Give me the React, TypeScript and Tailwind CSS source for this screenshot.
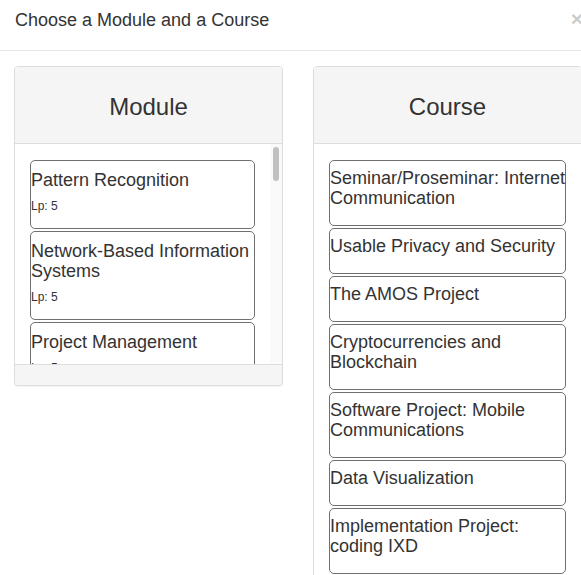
import React from "react";

const modules = [
  { name: "Pattern Recognition", lp: 5 },
  { name: "Network-Based Information Systems", lp: 5 },
  { name: "Project Management", lp: 5 },
  { name: "Software Engineering", lp: 5 },
];

const courses = [
  "Seminar/Proseminar: Internet Communication",
  "Usable Privacy and Security",
  "The AMOS Project",
  "Cryptocurrencies and Blockchain",
  "Software Project: Mobile Communications",
  "Data Visualization",
  "Implementation Project: coding IXD",
  "Machine Learning",
];

function PanelHeading({ title }: { title: string }) {
  return (
    <div className="bg-[#f5f5f5] border-b border-[#ddd] text-center text-[24px] leading-[26px] pt-[27px] pb-[23px] text-[#333]">
      {title}
    </div>
  );
}

export default function App() {
  return (
    <div className="relative w-[581px] h-[575px] overflow-hidden bg-white text-[#333] font-['Liberation_Sans',Arial,sans-serif]">
      <div className="relative border-b border-[#e5e5e5] pl-[15px] pt-[7px] pb-[17px]">
        <h4 className="text-[18px] leading-[26px] font-normal">Choose a Module and a Course</h4>
        <span className="absolute right-[-2px] top-[8px] text-[21px] font-bold leading-[21px] text-black opacity-20">
          ×
        </span>
      </div>
      <div className="flex pl-[14px] pt-[15px] gap-[30px]">
        {/* Module panel */}
        <div className="w-[269px] shrink-0 self-start border border-[#ddd] rounded-[4px] shadow-[0_1px_1px_rgba(0,0,0,0.05)] overflow-hidden bg-white">
          <PanelHeading title="Module" />
          <div className="flex h-[220px]">
            <div className="flex-1 overflow-hidden pl-[15px] pr-[15px] pt-[16px]">
              {modules.map((m) => (
                <div key={m.name} className="border border-[#707070] rounded-[5px] mb-[2px]">
                  <h4 className="text-[18px] leading-[20px] font-normal mt-[9px] mb-[8px]">{m.name}</h4>
                  <p className="text-[12px] leading-[17px] mb-[13px]">Lp: {m.lp}</p>
                </div>
              ))}
            </div>
            <div className="w-[12px] shrink-0 bg-[#fafafa] pt-[3px] flex justify-center">
              <div className="w-[6px] h-[34px] rounded-full bg-[#c1c1c1]" />
            </div>
          </div>
          <div className="h-[21px] border-t border-[#ddd] bg-[#f5f5f5]" />
        </div>
        {/* Course panel */}
        <div className="w-[269px] shrink-0 border border-[#ddd] rounded-[4px] shadow-[0_1px_1px_rgba(0,0,0,0.05)] bg-white">
          <PanelHeading title="Course" />
          <div className="pl-[15px] pr-[15px] pt-[16px]">
            {courses.map((c) => (
              <div key={c} className="border border-[#707070] rounded-[5px] mb-[2px]">
                <h4 className="text-[18px] leading-[20px] font-normal mt-[7px] mb-[17px] mr-[-4px]">{c}</h4>
              </div>
            ))}
          </div>
        </div>
      </div>
    </div>
  );
}
